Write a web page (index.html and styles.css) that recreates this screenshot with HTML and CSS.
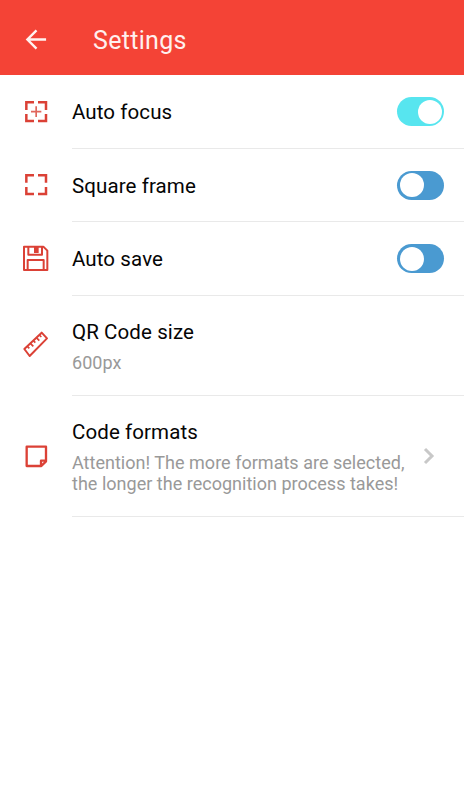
FILE: index.html
```html
<!DOCTYPE html>
<html lang="en">
<head>
<meta charset="utf-8">
<title>Settings</title>
<link rel="stylesheet" href="styles.css">
</head>
<body>
<header class="bar">
  <svg class="back" viewBox="0 0 24 24"><path d="M22 12H2.500M12 2.500 2.500 12l9.500 9.500"/></svg>
  <h1 class="title">Settings</h1>
</header>
<main class="list">
  <section class="row row-focus">
    <svg class="icon" viewBox="0 0 120 120"><path class="thick" d="M31 54V31H54M66 31H90V54M90 66V87H66M54 87H31V66"/><path class="fine" d="M60.500 43V75M45 59H76"/></svg>
    <div class="body"><span class="label">Auto focus</span><span class="switch on"></span></div>
  </section>
  <section class="row row-frame">
    <svg class="icon" viewBox="0 0 120 120"><path class="thick" d="M31 53V31H54M66 31H90V53M90 66V87H66M54 87H31V66"/></svg>
    <div class="body"><span class="label">Square frame</span><span class="switch"></span></div>
  </section>
  <section class="row row-save">
    <svg class="icon" viewBox="0 0 120 120"><path class="line" d="M24 23H82L94 35V93H24ZM35 93V63H83V93M37 23V47H78V23"/><path class="fill" d="M54 23H68V42H54Z"/></svg>
    <div class="body"><span class="label">Auto save</span><span class="switch"></span></div>
  </section>
  <section class="row row-size">
    <svg class="icon" viewBox="0 0 120 120"><path class="line" d="M25 75 77 26 93 43 41 96Z"/><path class="tick" d="M34 67 40 73M43 58 52 67M52 50 58 56M61 41 70 50M70 33 76 39"/></svg>
    <div class="body"><div class="texts"><span class="label">QR Code size</span><span class="note">600px</span></div></div>
  </section>
  <section class="row row-formats">
    <svg class="icon" viewBox="0 0 120 120"><path class="paper" d="M32 29H90V73L76 87H32ZM75 87V71H90"/></svg>
    <div class="body"><div class="texts"><span class="label">Code formats</span><span class="note">Attention! The more formats are selected,<br>the longer the recognition process takes!</span></div>
      <svg class="chevron" viewBox="0 0 12 18"><path d="M2 2 9 9 2 16"/></svg></div>
  </section>
</main>
</body>
</html>
```
FILE: styles.css
```css
body {
  margin: 0;
  min-height: 800px;
  background: #fff;
  font-family: Roboto, sans-serif;
  color: #050505;
}
.bar {
  box-sizing: border-box;
  display: flex;
  align-items: center;
  height: 75px;
  padding: 4px 0 0 25px;
  background: #f44336;
}
.back {
  width: 23px;
  height: 23px;
  margin: 0 45px 1px 0;
  fill: none;
  stroke: #fff3f0;
  stroke-width: 2.5;
}
.title {
  margin: 2px 0 0;
  font-size: 25px;
  line-height: 30px;
  font-weight: 400;
  letter-spacing: 0.3px;
  color: #fff0ee;
}
.row {
  display: flex;
  align-items: center;
  padding-left: 16px;
}
.row-focus, .row-save { height: 74px; }
.row-frame { height: 73px; }
.row-size { height: 100px; }
.row-formats { height: 121px; }
.icon {
  flex: none;
  width: 40px;
  height: 40px;
  margin-right: 16px;
  fill: none;
  stroke: #db4136;
}
.row-frame .icon { margin-bottom: 1px; }
.row-size .icon { margin-bottom: 4px; }
.thick { stroke-width: 7.5; }
.fine { stroke-width: 5; stroke: #e0665c; }
.line { stroke-width: 6; stroke-linejoin: round; }
.tick { stroke-width: 5; }
.paper { stroke-width: 7; stroke-linejoin: round; }
.fill { fill: #db4136; stroke: none; }
.body {
  box-sizing: border-box;
  flex: 1;
  display: flex;
  align-items: center;
  justify-content: space-between;
  height: 100%;
  padding-right: 20px;
  border-bottom: 1px solid #e9e9e9;
}
.texts {
  display: flex;
  flex-direction: column;
  gap: 8px;
  padding-top: 2px;
}
.label {
  font-size: 20.500px;
  line-height: 24px;
  letter-spacing: 0.1px;
}
.row-frame .label { padding-top: 2px; }
.note {
  font-size: 18px;
  line-height: 21px;
  letter-spacing: 0.020px;
  color: #999;
  white-space: nowrap;
}
.switch {
  box-sizing: border-box;
  display: flex;
  width: 47px;
  height: 29px;
  padding: 2.500px;
  border-radius: 15px;
  background: #4a9ad1;
}
.switch::before {
  content: "";
  width: 24px;
  height: 24px;
  border-radius: 50%;
  background: #fff;
}
.switch.on {
  justify-content: flex-end;
  background: #57e5ef;
}
.chevron {
  width: 12px;
  height: 18px;
  margin: 0 9px 1px 0;
  fill: none;
  stroke: #c8c8c8;
  stroke-width: 3;
}
```
